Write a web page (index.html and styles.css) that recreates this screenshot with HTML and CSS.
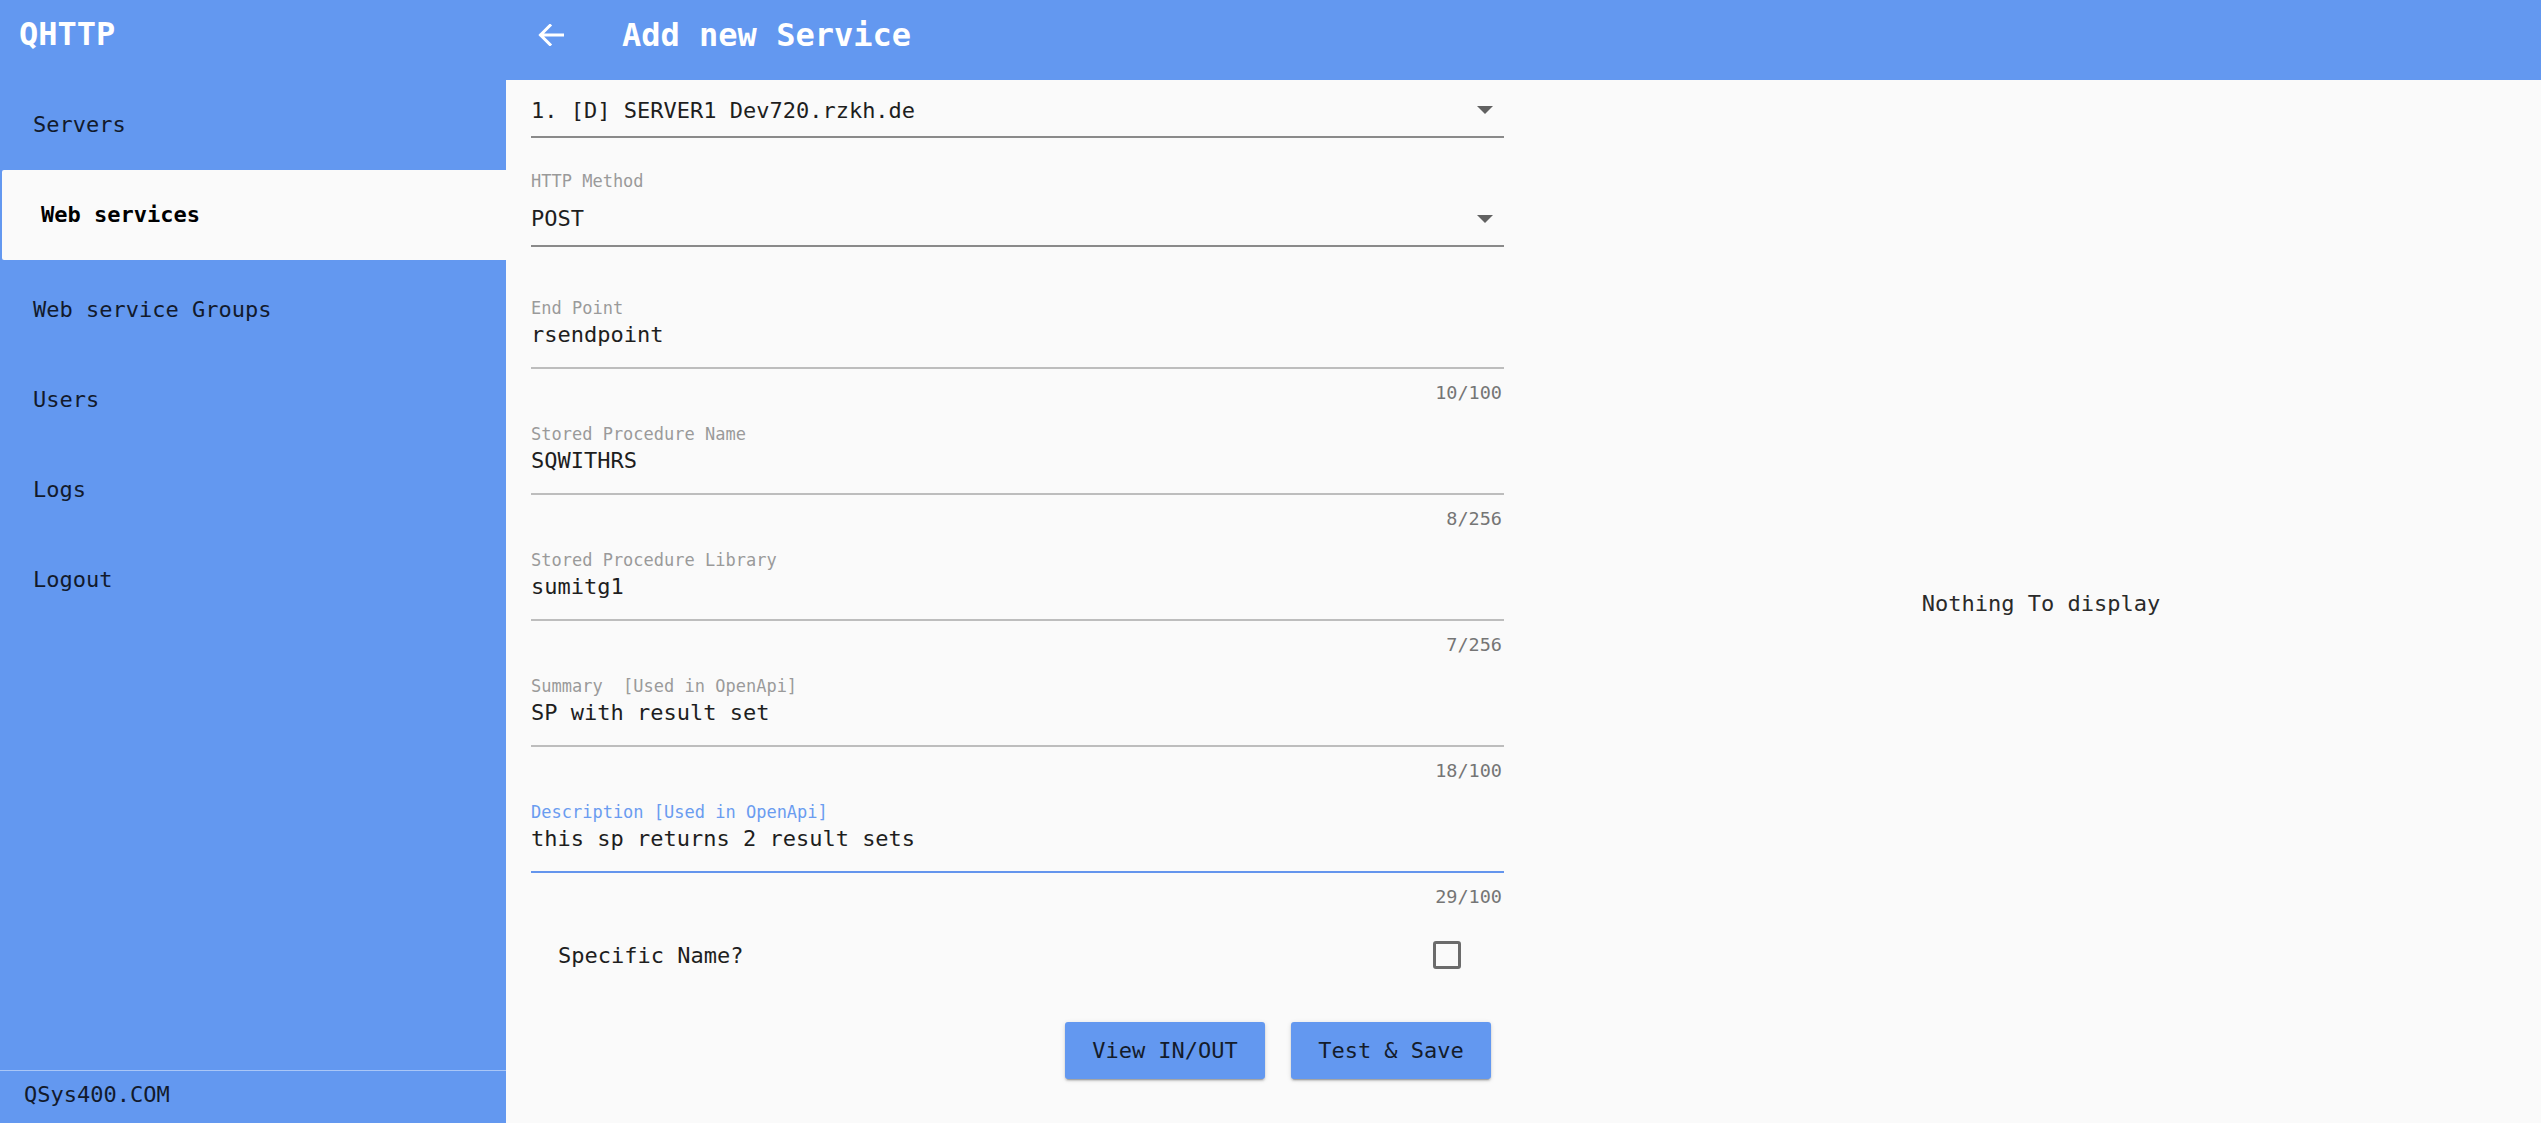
FILE: index.html
```html
<!DOCTYPE html>
<html>
<head>
<meta charset="utf-8">
<link rel="stylesheet" href="styles.css">
</head>
<body>
<div class="app">
  <aside class="sidebar">
    <div class="brand">QHTTP</div>
    <nav class="nav">
      <div class="nav-item">Servers</div>
      <div class="nav-item active">Web services</div>
      <div class="nav-item">Web service Groups</div>
      <div class="nav-item">Users</div>
      <div class="nav-item">Logs</div>
      <div class="nav-item">Logout</div>
    </nav>
    <div class="side-footer">QSys400.COM</div>
  </aside>
  <main class="main">
    <header class="topbar">
      <svg class="back" width="26" height="22" viewBox="0 0 26 22"><path d="M24.5 11H3M12 1.5L2.5 11L12 20.5" fill="none" stroke="#fff" stroke-width="3" stroke-linecap="square"/></svg>
      <h1 class="title">Add new Service</h1>
    </header>
    <div class="content">
      <section class="form">
        <div class="select first">
          <div class="value">1. [D] SERVER1 Dev720.rzkh.de</div>
          <span class="caret"></span>
        </div>
        <div class="select labeled">
          <div class="label">HTTP Method</div>
          <div class="value">POST</div>
          <span class="caret"></span>
        </div>
        <div class="field first-field">
          <div class="label">End Point</div>
          <div class="input">rsendpoint</div>
          <div class="counter">10/100</div>
        </div>
        <div class="field">
          <div class="label">Stored Procedure Name</div>
          <div class="input">SQWITHRS</div>
          <div class="counter">8/256</div>
        </div>
        <div class="field">
          <div class="label">Stored Procedure Library</div>
          <div class="input">sumitg1</div>
          <div class="counter">7/256</div>
        </div>
        <div class="field">
          <div class="label">Summary&nbsp;&nbsp;[Used in OpenApi]</div>
          <div class="input">SP with result set</div>
          <div class="counter">18/100</div>
        </div>
        <div class="field focused">
          <div class="label">Description [Used in OpenApi]</div>
          <div class="input">this sp returns 2 result sets</div>
          <div class="counter">29/100</div>
        </div>
        <div class="check-row">
          <span class="check-label">Specific Name?</span>
          <span class="checkbox"></span>
        </div>
        <div class="actions">
          <button class="btn">View IN/OUT</button>
          <button class="btn">Test &amp; Save</button>
        </div>
      </section>
      <section class="preview">
        <div class="empty">Nothing To display</div>
      </section>
    </div>
  </main>
</div>
</body>
</html>
```
FILE: styles.css
```css
* { box-sizing: border-box; }
html, body { margin: 0; padding: 0; }
body {
  font-family: "DejaVu Sans Mono", "Liberation Mono", monospace;
  background: #fafafa;
  color: #212121;
  width: 2541px;
  height: 1123px;
  overflow: hidden;
}
.app {
  display: grid;
  grid-template-columns: 506px 1fr;
  height: 1123px;
}
.sidebar {
  background: #6398f0;
  display: flex;
  flex-direction: column;
  color: #121a2c;
}
.brand {
  height: 80px;
  padding: 12px 0 0 19px;
  font-size: 32px;
  font-weight: bold;
  color: #fff;
  line-height: 44px;
}
.nav { flex: 1; }
.nav-item {
  height: 90px;
  display: flex;
  align-items: center;
  padding-left: 33px;
  font-size: 22px;
  padding-bottom: 2px;
}
.nav-item.active {
  background: #fafafa;
  margin-left: 2px;
  margin-bottom: 5px;
  padding-left: 39px;
  font-weight: bold;
  color: #000;
  border-radius: 2px 0 0 2px;
}
.side-footer {
  border-top: 1px solid rgba(255,255,255,0.45);
  height: 53px;
  padding: 9px 0 0 24px;
  font-size: 22px;
  line-height: 30px;
}
.main {
  display: flex;
  flex-direction: column;
  min-width: 0;
}
.topbar {
  height: 80px;
  background: #6398f0;
  display: flex;
  align-items: center;
  padding: 0 0 10px 32px;
}
.back { display: block; }
.title {
  margin: 0 0 0 58px;
  font-size: 32px;
  font-weight: bold;
  color: #fff;
  line-height: 40px;
}
.content {
  flex: 1;
  display: grid;
  grid-template-columns: 1035px 1fr;
}
.form {
  padding: 0 37px 0 25px;
}
.select {
  position: relative;
  border-bottom: 2px solid #8a8a8a;
  padding-bottom: 11px;
}
.select.first { padding-top: 16px; padding-bottom: 10px; }
.select.labeled { margin-top: 33px; }
.select.labeled .value { margin-top: 13px; }
.value, .input {
  font-size: 22px;
  line-height: 30px;
  color: #1e1e1e;
  white-space: pre;
}
.caret {
  position: absolute;
  right: 11px;
  bottom: 22px;
  width: 0;
  height: 0;
  border-left: 8px solid transparent;
  border-right: 8px solid transparent;
  border-top: 8px solid #616161;
}
.label {
  font-size: 17px;
  line-height: 20px;
  color: #9a9a9a;
  white-space: pre;
}
.field { margin-bottom: 21px; }
.field.first-field { margin-top: 51px; }
.field .input {
  margin-top: 2px;
  padding-bottom: 17px;
  border-bottom: 2px solid #bdbdbd;
}
.counter {
  margin-top: 14px;
  font-size: 18.5px;
  line-height: 20px;
  color: #757575;
  text-align: right;
  padding-right: 2px;
}
.field.focused .label { color: #6a9cf0; }
.field.focused .input { border-bottom-color: #6495ed; }
.check-row {
  height: 54px;
  display: flex;
  align-items: center;
  justify-content: space-between;
  padding: 0 43px 0 27px;
}
.check-label { font-size: 22px; color: #1e1e1e; }
.checkbox {
  width: 28px;
  height: 28px;
  border: 3px solid #6b6b6b;
  border-radius: 3px;
}
.actions {
  margin-top: 40px;
  display: flex;
  justify-content: flex-end;
  gap: 26px;
  padding-right: 13px;
}
.btn {
  width: 200px;
  height: 57px;
  border: none;
  border-radius: 3px;
  background: #6398f0;
  color: #141c2b;
  font-family: "DejaVu Sans Mono", "Liberation Mono", monospace;
  font-size: 22px;
  box-shadow: 0 3px 1px -2px rgba(0,0,0,0.2), 0 2px 2px 0 rgba(0,0,0,0.14), 0 1px 5px 0 rgba(0,0,0,0.12);
}
.preview {
  display: flex;
  align-items: center;
  justify-content: center;
  padding-top: 4px;
}
.empty {
  font-size: 22px;
  color: #2a2a2a;
}
```
